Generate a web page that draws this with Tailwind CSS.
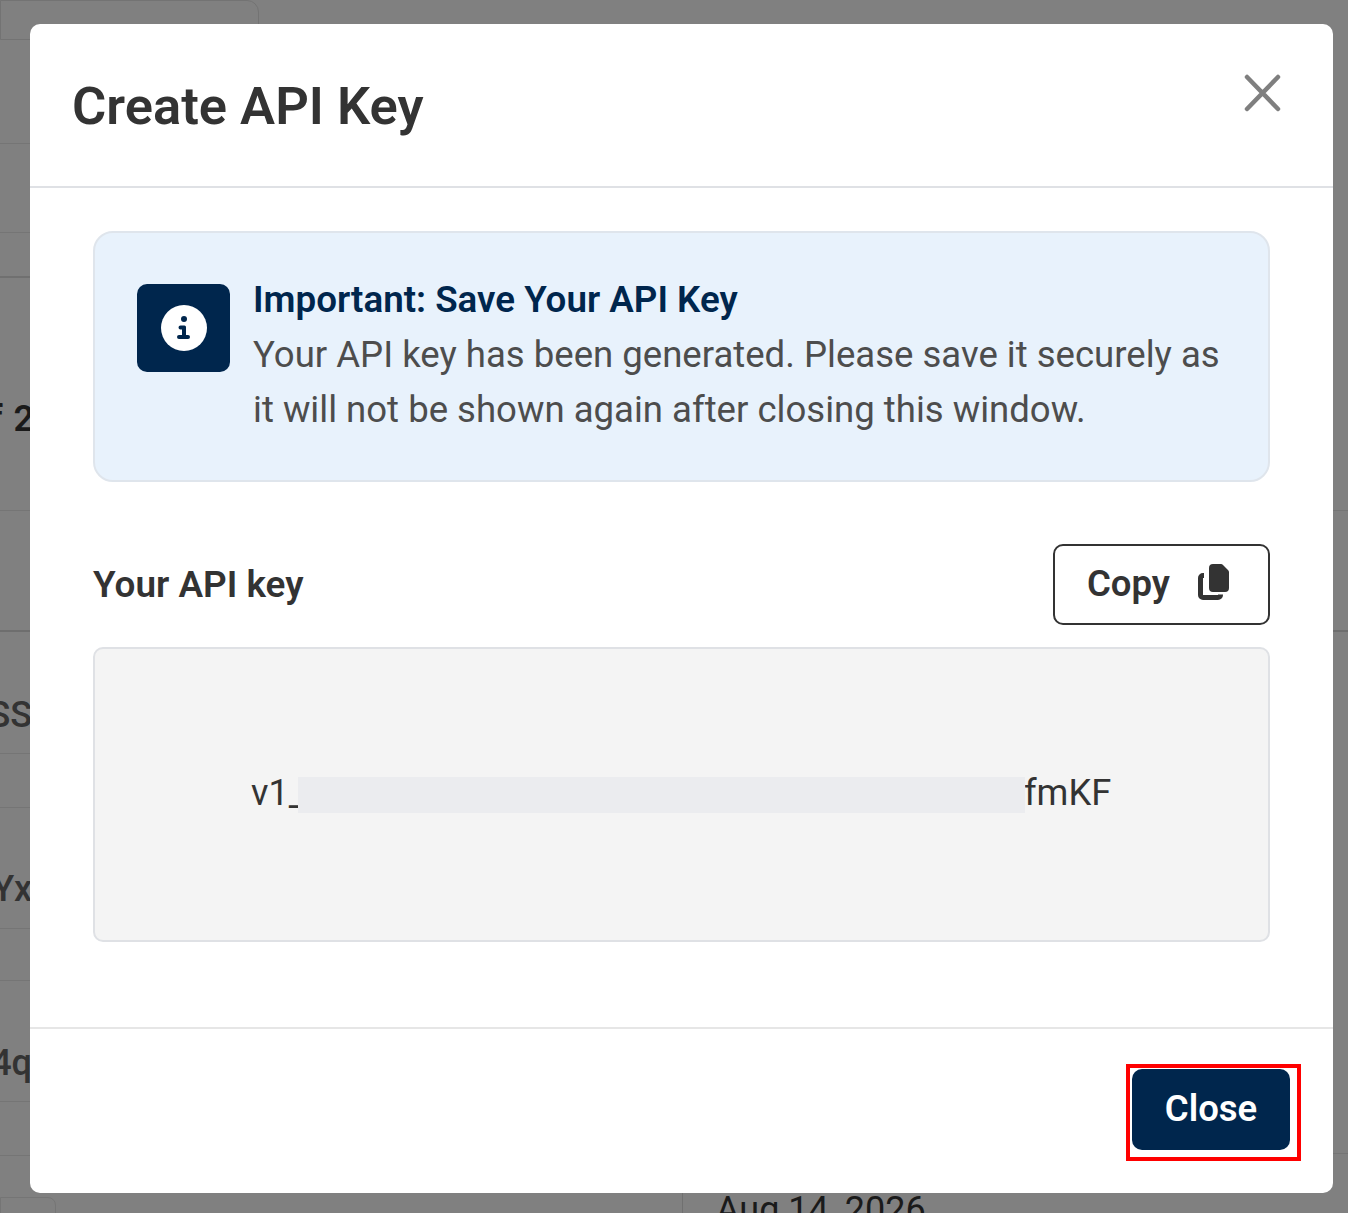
<!DOCTYPE html>
<html lang="en">
<head>
<meta charset="UTF-8">
<title>Create API Key</title>
<script src="https://cdn.jsdelivr.net/npm/@tailwindcss/browser@4"></script>
</head>
<body class="bg-[#808080] font-['Roboto',sans-serif] overflow-hidden">
<div class="relative w-[1348px] h-[1213px] overflow-hidden">
    <!-- page behind the overlay -->
    <div class="absolute left-0 top-0 w-[259px] h-[40px] border border-[#737373] rounded-tr-[12px]"></div>
    <div class="absolute left-0 top-[143px] w-[30px] border-t border-[#757575]"></div>
    <div class="absolute left-0 top-[232px] w-[30px] border-t border-[#757575]"></div>
    <div class="absolute left-0 top-[276px] w-[30px] border-t-2 border-[#707070]"></div>
    <div class="absolute left-0 top-[510px] w-[30px] border-t border-[#757575]"></div>
    <div class="absolute left-0 top-[630px] w-[30px] border-t-2 border-[#6e6e6e]"></div>
    <div class="absolute left-0 top-[753px] w-[30px] border-t border-[#757575]"></div>
    <div class="absolute left-0 top-[807px] w-[30px] border-t border-[#757575]"></div>
    <div class="absolute left-0 top-[928px] w-[30px] border-t border-[#757575]"></div>
    <div class="absolute left-0 top-[980px] w-[30px] border-t border-[#757575]"></div>
    <div class="absolute left-0 top-[1101px] w-[30px] border-t border-[#757575]"></div>
    <div class="absolute left-0 top-[1155px] w-[30px] border-t border-[#757575]"></div>
    <div class="absolute left-0 top-[1197px] w-[56px] h-[20px] border border-[#757575] rounded-tr-[8px]"></div>
    <div class="absolute left-[682px] top-[1193px] h-[20px] border-l border-[#707070]"></div>
    <div class="absolute left-[1333px] top-[510px] w-[15px] border-t border-[#757575]"></div>
    <div class="absolute left-[1333px] top-[630px] w-[15px] border-t-2 border-[#6e6e6e]"></div>
    <div class="absolute left-[1333px] top-[1153px] w-[15px] border-t border-[#757575]"></div>
    <span class="absolute right-[1313px] top-[398px] text-[36px] leading-[42px] font-semibold tracking-[1px] text-[#1a1a1a] whitespace-nowrap">f 2</span>
    <span class="absolute right-[1316px] top-[694px] text-[36px] leading-[42px] font-medium text-[#333] whitespace-nowrap">SS</span>
    <span class="absolute right-[1316px] top-[868px] text-[36px] leading-[42px] font-medium text-[#333] whitespace-nowrap">Yx</span>
    <span class="absolute right-[1316px] top-[1042px] text-[36px] leading-[42px] font-medium text-[#333] whitespace-nowrap">4q</span>
    <span class="absolute left-[716px] top-[1189px] text-[36px] leading-[42px] text-[#1a1a1a] whitespace-nowrap">Aug 14, 2026</span>

    <!-- modal -->
    <div class="absolute left-[30px] top-[24px] w-[1303px] h-[1169px] bg-white rounded-[10px] flex flex-col">
        <div class="h-[164px] shrink-0 border-b-2 border-[#dfe1e5] flex justify-between pl-[42px] pr-[48px]">
            <h1 class="mt-[52px] text-[52.5px] leading-[60px] font-semibold text-[#333333]">Create API Key</h1>
            <svg class="mt-[48px] w-[44px] h-[44px]" viewBox="0 0 44 44" fill="none" stroke="#7f7f7f" stroke-width="4.5" stroke-linecap="round">
                <path d="M6 5 L37 37 M37 5 L6 37"/>
            </svg>
        </div>
        <div class="flex-1 pt-[43px] px-[63px]">
            <div class="h-[251px] bg-[#e8f2fc] border-2 border-[#dfe5ec] rounded-[20px] flex pl-[42px] pt-[51px]">
                <div class="w-[93px] h-[88px] bg-[#00264d] rounded-[10px] flex items-center justify-center shrink-0">
                    <svg class="w-[46px] h-[46px]" viewBox="0 0 46 46">
                        <circle cx="23" cy="23" r="23" fill="#fff"/>
                        <circle cx="23" cy="14" r="3" fill="#00264d"/>
                        <path d="M19.5 20.5 h4 a1.5 1.5 0 0 1 1.5 1.5 v8 h2 a2 2 0 0 1 0 4 h-9 a2 2 0 0 1 0 -4 h3 v-5.5 h-1.5 a2 2 0 0 1 0 -4z" fill="#00264d"/>
                    </svg>
                </div>
                <div class="ml-[23px] mt-[-11px]">
                    <div class="text-[36.75px] leading-[54px] font-semibold text-[#00264d]">Important: Save Your API Key</div>
                    <p class="text-[36.55px] leading-[55px] text-[#4d4d4d] w-[985px]">Your API key has been generated. Please save it securely as it will not be shown again after closing this window.</p>
                </div>
            </div>
            <div class="flex justify-between items-center mt-[62px] h-[81px]">
                <span class="text-[36.9px] font-semibold text-[#333333]">Your API key</span>
                <button class="w-[217px] h-[81px] border-2 border-[#333333] rounded-[10px] flex items-center pl-[32px] text-[36.5px] font-semibold text-[#333333]">
                    Copy
                    <svg class="ml-[27px] w-[34px] h-[38px] mt-[-6px]" viewBox="0 0 34 38" fill="#333333">
                        <path d="M16 1 h8 a3 3 0 0 1 2 1 l5 5 a3 3 0 0 1 1 2 v16 a4 4 0 0 1 -4 4 h-12 a4 4 0 0 1 -4 -4 v-20 a4 4 0 0 1 4 -4z"/>
                        <path d="M7 12.5 h-1 a2.5 2.5 0 0 0 -2.5 2.5 v17 a2.5 2.5 0 0 0 2.5 2.5 h15 a2.5 2.5 0 0 0 2.5 -2.5 v-0.5" fill="none" stroke="#333333" stroke-width="5"/>
                    </svg>
                </button>
            </div>
            <div class="relative mt-[22px] h-[295px] bg-[#f4f4f4] border-2 border-[#dfe1e5] rounded-[10px]">
                <span class="absolute left-[156px] top-[122px] text-[36px] leading-[44px] text-[#333333]">v1_</span>
                <span class="absolute left-[929px] top-[122px] text-[36.3px] leading-[44px] text-[#333333]">fmKF</span>
                <div class="absolute left-[203px] top-[128px] w-[727px] h-[36px] bg-[#ebecef]"></div>
            </div>
        </div>
        <div class="h-[166px] shrink-0 border-t-2 border-[#e6e6e6] flex justify-end pr-[43px] pt-[40px]">
            <button class="w-[158px] h-[81px] bg-[#00264d] rounded-[10px] text-[36.5px] leading-[76px] pb-[1px] font-semibold text-white">Close</button>
        </div>
    </div>
    <!-- highlight around the close button -->
    <div class="absolute left-[1126px] top-[1064px] w-[175px] h-[97px] border-[4px] border-[#ff0000]"></div>
</div>
</body>
</html>
